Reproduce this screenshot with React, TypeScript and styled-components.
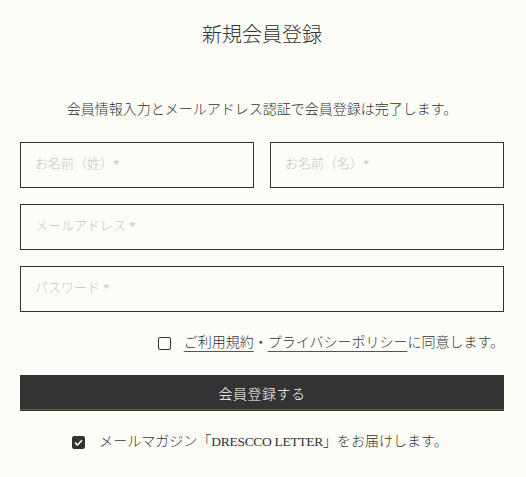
import React from "react";
import styled, { createGlobalStyle } from "styled-components";

const Global = createGlobalStyle`
  html, body { margin: 0; padding: 0; background: #fdfdf8; }
  body {
    font-family: "Liberation Serif", "Noto Sans CJK JP", sans-serif;
    font-weight: 300;
    color: #333;
  }
  * { box-sizing: border-box; }
`;

const Page = styled.div`
  padding: 20px 22px 0 20px;
  display: flex;
  flex-direction: column;
`;

const Title = styled.h1`
  margin: 0;
  font-size: 20px;
  line-height: 28px;
  font-weight: 300;
  text-align: center;
  color: #333;
  font-family: "Noto Sans CJK JP", sans-serif;
`;

const Lead = styled.p`
  margin: 52px 0 0;
  font-size: 14px;
  line-height: 20px;
  text-align: center;
  color: #333;
`;

const Fields = styled.div`
  margin-top: 22px;
  display: flex;
  flex-direction: column;
  gap: 16px;
`;

const Row = styled.div`
  display: grid;
  grid-template-columns: 1fr 1fr;
  gap: 16px;
`;

const Input = styled.input`
  display: block;
  width: 100%;
  height: 46px;
  border: 1px solid #333;
  border-radius: 0;
  background: transparent;
  padding: 0 14px 3px;
  font-family: "Liberation Serif", "Noto Sans CJK JP", sans-serif;
  font-weight: 300;
  font-size: 13px;
  color: #333;
  outline: none;
  &::placeholder { color: #c4c4c4; }
`;

const AgreeRow = styled.label`
  margin-top: 21px;
  display: flex;
  justify-content: flex-end;
  align-items: center;
  gap: 13px;
  font-size: 14px;
  line-height: 20px;
  color: #333;
`;

const Box = styled.span<{ $checked?: boolean }>`
  width: 13px;
  height: 13px;
  border: 1px solid #333;
  border-radius: 2px;
  background: ${(p) => (p.$checked ? "#333" : "transparent")};
  display: inline-flex;
  align-items: center;
  justify-content: center;
  flex: none;
`;

const Link = styled.a`
  color: #333;
  text-decoration: underline;
  text-underline-offset: 4px;
  text-decoration-thickness: 1px;
  text-decoration-color: #555;
`;

const Submit = styled.button`
  margin-top: 22px;
  height: 36px;
  width: 100%;
  border: none;
  background: #333;
  color: #fff;
  font-family: "Noto Sans CJK JP", sans-serif;
  font-weight: 300;
  font-size: 14px;
  letter-spacing: 0.5px;
  box-shadow: inset 0 -1px 0 #333, inset 0 -2px 0 #5c5c5c;
  padding: 0;
  cursor: pointer;
`;

const NewsRow = styled.label`
  margin-top: 21px;
  margin-right: 4px;
  display: flex;
  justify-content: center;
  align-items: center;
  gap: 14px;
  font-size: 14px;
  line-height: 20px;
  color: #333;
`;

const Brand = styled.span`
  font-size: 13.5px;
  letter-spacing: -0.3px;
`;

export default function App() {
  return (
    <>
      <Global />
      <Page>
        <Title>新規会員登録</Title>
        <Lead>会員情報入力とメールアドレス認証で会員登録は完了します。</Lead>
        <Fields>
          <Row>
            <Input placeholder="お名前（姓）*" />
            <Input placeholder="お名前（名）*" />
          </Row>
          <Input placeholder="メールアドレス *" />
          <Input placeholder="パスワード *" type="password" />
        </Fields>
        <AgreeRow>
          <Box />
          <span>
            <Link>ご利用規約</Link>・<Link>プライバシーポリシー</Link>に同意します。
          </span>
        </AgreeRow>
        <Submit>会員登録する</Submit>
        <NewsRow>
          <Box $checked>
            <svg width="9" height="7" viewBox="0 0 9 7">
              <path d="M1 3.6 L3.4 6 L8 1.2" stroke="#fff" strokeWidth="1.6" fill="none" />
            </svg>
          </Box>
          <span>
            メールマガジン「<Brand>DRESCCO LETTER</Brand>」をお届けします。
          </span>
        </NewsRow>
      </Page>
    </>
  );
}
